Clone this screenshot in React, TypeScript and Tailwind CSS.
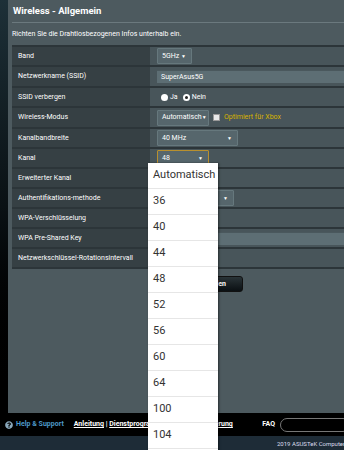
import { FaQuestionCircle } from 'react-icons/fa';

interface Row {
  label: string;
  h: string;
  content?: JSX.Element | null;
}

function Caret () {
  return <span className="text-[5px] leading-none text-white">▼</span>;
}

function Select ({ value, width, active }: { value: string; width: string; active?: boolean }) {
  return (
    <div
      className={`flex items-center justify-between h-[16px] pl-[4px] pr-[5px] bg-[#56666c] border ${
        active ? 'border-[#b8902e]' : 'border-[#66787d]'
      } ${width} rounded-[1px]`}
    >
      <span className="text-[7px] text-white whitespace-nowrap">{value}</span>
      <Caret />
    </div>
  );
}

const rows: Row[] = [
  { label: 'Band', h: 'h-[20px]', content: <Select value="5GHz" width="w-[35px]" /> },
  {
    label: 'Netzwerkname (SSID)',
    h: 'h-[21px]',
    content: (
      <div className="flex items-center h-[13px] w-full pl-[4px] bg-[#5d6e74] border-t border-[#4a585d]">
        <span className="text-[7px] text-white">SuperAsus5G</span>
      </div>
    ),
  },
  {
    label: 'SSID verbergen',
    h: 'h-[20px]',
    content: (
      <div className="flex items-center gap-[2px] pl-[4px] text-[7px] text-white">
        <span className="w-[7px] h-[7px] rounded-full bg-white" />
        <span className="mr-[3px]">Ja</span>
        <span className="w-[7px] h-[7px] rounded-full bg-white flex items-center justify-center">
          <span className="w-[3px] h-[3px] rounded-full bg-[#222]" />
        </span>
        <span>Nein</span>
      </div>
    ),
  },
  {
    label: 'Wireless-Modus',
    h: 'h-[21px]',
    content: (
      <div className="flex items-center">
        <Select value="Automatisch" width="w-[52px]" />
        <span className="ml-[4px] w-[7px] h-[7px] bg-[#e8e8e8] border border-[#999]" />
        <span className="ml-[4px] text-[7px] text-[#d8b400]">Optimiert für Xbox</span>
      </div>
    ),
  },
  { label: 'Kanalbandbreite', h: 'h-[20px]', content: <Select value="40 MHz" width="w-[81px]" /> },
  { label: 'Kanal', h: 'h-[20px]', content: <Select value="48" width="w-[52px]" active /> },
  { label: 'Erweiterter Kanal', h: 'h-[20px]', content: null },
  {
    label: 'Authentifikations-methode',
    h: 'h-[20px]',
    content: <Select value="" width="w-[77px]" />,
  },
  { label: 'WPA-Verschlüsselung', h: 'h-[20px]', content: null },
  {
    label: 'WPA Pre-Shared Key',
    h: 'h-[20px]',
    content: <div className="h-[13px] w-full bg-[#5d6e74] border-t border-[#4a585d]" />,
  },
  { label: 'Netzwerkschlüssel-Rotationsintervall', h: 'h-[20px]', content: null },
];

const channels = ['Automatisch', '36', '40', '44', '48', '52', '56', '60', '64', '100', '104'];

function App () {
  return (
    <div className="relative w-[344px] h-[450px] overflow-hidden bg-black font-['Roboto',sans-serif]">
      <div className="flex h-[413px]">
        <div className="w-[8px] bg-gradient-to-b from-[#1d3038] via-[#0a1114] to-black" />
        <div className="flex-1 flex flex-col bg-[#4d5a5f]">
          <div className="h-[22px] flex items-center pl-[5px]">
            <span className="text-[9.5px] font-bold text-white">Wireless - Allgemein</span>
          </div>
          <div className="ml-[4px] h-[1px] bg-[#6b797e]" />
          <div className="h-[22px] flex items-center pl-[4px]">
            <span className="text-[7px] text-white">
              Richten Sie die Drahtlosbezogenen Infos unterhalb ein.
            </span>
          </div>
          <div className="ml-[4px] flex flex-col border-t-2 border-[#2c3539]">
            {rows.map((row, key) => (
              <div key={key} className={`flex ${row.h} border-b-2 border-[#2c3539]`}>
                <div className="w-[138px] shrink-0 flex items-center pl-[6px] bg-[#364044]">
                  <span className="text-[7px] text-white">{row.label}</span>
                </div>
                <div className="flex-1 flex items-center pl-[7px] bg-[#48555a]">{row.content}</div>
              </div>
            ))}
          </div>
          <div className="mt-[7px] ml-[168px] w-[67px] h-[16px] flex items-center justify-center rounded-[3px] bg-gradient-to-b from-[#2a3438] to-[#0b1013] border border-[#111]">
            <span className="text-[7px] font-bold text-white">Anwenden</span>
          </div>
        </div>
      </div>
      <div className="h-[23px] flex items-center pl-[5px] text-[7px] font-bold whitespace-nowrap overflow-hidden">
        <FaQuestionCircle className="shrink-0 text-[#8aa8bb] w-[8px] h-[8px]" />
        <span className="ml-[3px] text-[#4d98c8]">Help &amp; Support</span>
        <span className="ml-[10px] text-white">
          <span className="underline">Anleitung</span> | <span className="underline">Dienstprogramm</span> |{' '}
          <span className="underline">Produktregistrierung</span>
        </span>
        <span className="ml-auto text-white">FAQ</span>
        <div className="shrink-0 ml-[5px] mr-[-6px] w-[70px] h-[14px] rounded-full border border-[#777] bg-black" />
      </div>
      <div className="h-[14px] flex items-center pl-[277px] bg-[#1e2c37] whitespace-nowrap overflow-hidden">
        <span className="text-[6px] text-[#dde]">2019 ASUSTeK Computer Inc.</span>
      </div>

      <div className="absolute left-[148px] top-[163px] w-[70px] h-[290px] bg-white shadow-[1px_0_2px_rgba(0,0,0,0.5)]">
        {channels.map((c) => (
          <div key={c} className="h-[26px] flex items-center pl-[5px] border-b border-[#e6e6e6]">
            <span className="text-[11px] text-[#333]">{c}</span>
          </div>
        ))}
      </div>
    </div>
  );
}

export default App;
